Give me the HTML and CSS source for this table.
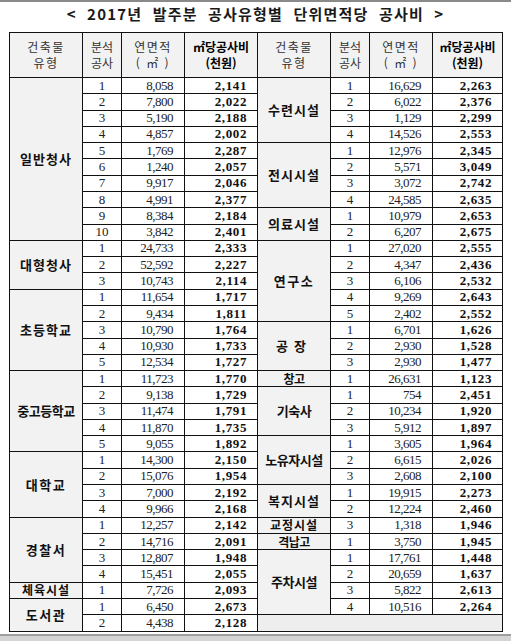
FILE: index.html
```html
<!DOCTYPE html>
<html lang="ko">
<head>
<meta charset="utf-8">
<title>2017년 발주분 공사유형별 단위면적당 공사비</title>
<link rel="stylesheet" href="styles.css">
</head>
<body>
<div class="page">
  <h1 class="title">&lt; 2017년 발주분 공사유형별 단위면적당 공사비 &gt;</h1>
  <table class="cost-table">
    <colgroup>
      <col class="c-type"><col class="c-no"><col class="c-area"><col class="c-cost">
      <col class="c-type"><col class="c-no"><col class="c-area"><col class="c-cost2">
    </colgroup>
    <thead>
      <tr>
        <th class="h-plain sp">건축물<br>유형</th>
        <th class="h-plain">분석<br>공사</th>
        <th class="h-plain sp">연면적<br>( ㎡ )</th>
        <th class="h-bold">㎡당공사비<br>(천원)</th>
        <th class="h-plain sp">건축물<br>유형</th>
        <th class="h-plain">분석<br>공사</th>
        <th class="h-plain sp">연면적<br>( ㎡ )</th>
        <th class="h-bold">㎡당공사비<br>(천원)</th>
      </tr>
    </thead>
    <tbody>
      <tr><td class="cat" rowspan="10">일반청사</td><td class="n">1</td><td class="a">8,058</td><td class="c">2,141</td><td class="cat" rowspan="4">수련시설</td><td class="n">1</td><td class="a">16,629</td><td class="c">2,263</td></tr>
      <tr><td class="n">2</td><td class="a">7,800</td><td class="c">2,022</td><td class="n">2</td><td class="a">6,022</td><td class="c">2,376</td></tr>
      <tr><td class="n">3</td><td class="a">5,190</td><td class="c">2,188</td><td class="n">3</td><td class="a">1,129</td><td class="c">2,299</td></tr>
      <tr><td class="n">4</td><td class="a">4,857</td><td class="c">2,002</td><td class="n">4</td><td class="a">14,526</td><td class="c">2,553</td></tr>
      <tr><td class="n">5</td><td class="a">1,769</td><td class="c">2,287</td><td class="cat" rowspan="4">전시시설</td><td class="n">1</td><td class="a">12,976</td><td class="c">2,345</td></tr>
      <tr><td class="n">6</td><td class="a">1,240</td><td class="c">2,057</td><td class="n">2</td><td class="a">5,571</td><td class="c">3,049</td></tr>
      <tr><td class="n">7</td><td class="a">9,917</td><td class="c">2,046</td><td class="n">3</td><td class="a">3,072</td><td class="c">2,742</td></tr>
      <tr><td class="n">8</td><td class="a">4,991</td><td class="c">2,377</td><td class="n">4</td><td class="a">24,585</td><td class="c">2,635</td></tr>
      <tr><td class="n">9</td><td class="a">8,384</td><td class="c">2,184</td><td class="cat" rowspan="2">의료시설</td><td class="n">1</td><td class="a">10,979</td><td class="c">2,653</td></tr>
      <tr><td class="n">10</td><td class="a">3,842</td><td class="c">2,401</td><td class="n">2</td><td class="a">6,207</td><td class="c">2,675</td></tr>
      <tr><td class="cat" rowspan="3">대형청사</td><td class="n">1</td><td class="a">24,733</td><td class="c">2,333</td><td class="cat wide" rowspan="5">연구소</td><td class="n">1</td><td class="a">27,020</td><td class="c">2,555</td></tr>
      <tr><td class="n">2</td><td class="a">52,592</td><td class="c">2,227</td><td class="n">2</td><td class="a">4,347</td><td class="c">2,436</td></tr>
      <tr><td class="n">3</td><td class="a">10,743</td><td class="c">2,114</td><td class="n">3</td><td class="a">6,106</td><td class="c">2,532</td></tr>
      <tr><td class="cat" rowspan="5">초등학교</td><td class="n">1</td><td class="a">11,654</td><td class="c">1,717</td><td class="n">4</td><td class="a">9,269</td><td class="c">2,643</td></tr>
      <tr><td class="n">2</td><td class="a">9,434</td><td class="c">1,811</td><td class="n">5</td><td class="a">2,402</td><td class="c">2,552</td></tr>
      <tr><td class="n">3</td><td class="a">10,790</td><td class="c">1,764</td><td class="cat wider" rowspan="3">공장</td><td class="n">1</td><td class="a">6,701</td><td class="c">1,626</td></tr>
      <tr><td class="n">4</td><td class="a">10,930</td><td class="c">1,733</td><td class="n">2</td><td class="a">2,930</td><td class="c">1,528</td></tr>
      <tr><td class="n">5</td><td class="a">12,534</td><td class="c">1,727</td><td class="n">3</td><td class="a">2,930</td><td class="c">1,477</td></tr>
      <tr><td class="cat tight" rowspan="5">중고등학교</td><td class="n">1</td><td class="a">11,723</td><td class="c">1,770</td><td class="cat single tight">창고</td><td class="n">1</td><td class="a">26,631</td><td class="c">1,123</td></tr>
      <tr><td class="n">2</td><td class="a">9,138</td><td class="c">1,729</td><td class="cat tight" rowspan="3">기숙사</td><td class="n">1</td><td class="a">754</td><td class="c">2,451</td></tr>
      <tr><td class="n">3</td><td class="a">11,474</td><td class="c">1,791</td><td class="n">2</td><td class="a">10,234</td><td class="c">1,920</td></tr>
      <tr><td class="n">4</td><td class="a">11,870</td><td class="c">1,735</td><td class="n">3</td><td class="a">5,912</td><td class="c">1,897</td></tr>
      <tr><td class="n">5</td><td class="a">9,055</td><td class="c">1,892</td><td class="cat tight" rowspan="3">노유자시설</td><td class="n">1</td><td class="a">3,605</td><td class="c">1,964</td></tr>
      <tr><td class="cat wide" rowspan="4">대학교</td><td class="n">1</td><td class="a">14,300</td><td class="c">2,150</td><td class="n">2</td><td class="a">6,615</td><td class="c">2,026</td></tr>
      <tr><td class="n">2</td><td class="a">15,076</td><td class="c">1,954</td><td class="n">3</td><td class="a">2,608</td><td class="c">2,100</td></tr>
      <tr><td class="n">3</td><td class="a">7,000</td><td class="c">2,192</td><td class="cat" rowspan="2">복지시설</td><td class="n">1</td><td class="a">19,915</td><td class="c">2,273</td></tr>
      <tr><td class="n">4</td><td class="a">9,966</td><td class="c">2,168</td><td class="n">2</td><td class="a">12,224</td><td class="c">2,460</td></tr>
      <tr><td class="cat wide" rowspan="4">경찰서</td><td class="n">1</td><td class="a">12,257</td><td class="c">2,142</td><td class="cat single">교정시설</td><td class="n">3</td><td class="a">1,318</td><td class="c">1,946</td></tr>
      <tr><td class="n">2</td><td class="a">14,716</td><td class="c">2,091</td><td class="cat single tight">격납고</td><td class="n">1</td><td class="a">3,750</td><td class="c">1,945</td></tr>
      <tr><td class="n">3</td><td class="a">12,807</td><td class="c">1,948</td><td class="cat tight" rowspan="4">주차시설</td><td class="n">1</td><td class="a">17,761</td><td class="c">1,448</td></tr>
      <tr><td class="n">4</td><td class="a">15,451</td><td class="c">2,055</td><td class="n">2</td><td class="a">20,659</td><td class="c">1,637</td></tr>
      <tr><td class="cat single">체육시설</td><td class="n">1</td><td class="a">7,726</td><td class="c">2,093</td><td class="n">3</td><td class="a">5,822</td><td class="c">2,613</td></tr>
      <tr><td class="cat wide" rowspan="2">도서관</td><td class="n">1</td><td class="a">6,450</td><td class="c">2,673</td><td class="n">4</td><td class="a">10,516</td><td class="c">2,264</td></tr>
      <tr><td class="n">2</td><td class="a">4,438</td><td class="c">2,128</td><td class="empty" colspan="4"></td></tr>
    </tbody>
  </table>
  <div class="bottom-bar"></div>
</div>
</body>
</html>
```

FILE: styles.css
```css
html, body {
  margin: 0;
  padding: 0;
  background: #ffffff;
  overflow: hidden;
}

.page {
  border-top: 2px solid #8a8a8a;
}

.title {
  margin: 0;
  height: 30px;
  line-height: 24px;
  text-align: center;
  font-family: "Noto Sans CJK KR", "Noto Sans", sans-serif;
  font-size: 15px;
  font-weight: 700;
  color: #1a1a1a;
  letter-spacing: 1.2px;
  word-spacing: 5px;
}

.cost-table {
  margin: 0 0 0 9px;
  width: 494px;
  height: 600px;
  border-collapse: collapse;
  table-layout: fixed;
  border: 1px solid #000;
}

.c-type { width: 73px; }
.c-no { width: 39px; }
.c-area { width: 63px; }
.c-cost { width: 73px; }
.c-cost2 { width: 70px; }

.cost-table th,
.cost-table td {
  border: 1px solid #111;
  padding: 0;
  overflow: hidden;
}

.cost-table thead th {
  height: 44px;
  background: #f2f2f2;
  font-family: "Noto Sans CJK KR", "Noto Sans", sans-serif;
  font-size: 12px;
  line-height: 16px;
  text-align: center;
  vertical-align: middle;
}

.h-plain {
  font-weight: 400;
  color: #333;
}

.h-plain.sp {
  letter-spacing: 1.5px;
}

.h-bold {
  font-weight: 700;
  color: #000;
}

.cost-table tbody td {
  line-height: 14px;
  font-family: "Liberation Serif", "Times New Roman", serif;
  color: #222;
}

.n {
  font-size: 13px;
  text-align: center;
}

.a {
  font-size: 13px;
  letter-spacing: -0.5px;
  text-align: right;
  padding-right: 11px !important;
}

.c {
  font-size: 13px;
  font-weight: 700;
  text-align: right;
  letter-spacing: 0.6px;
  padding-right: 10px !important;
  color: #111 !important;
}

.cat {
  background: #f2f2f2;
  text-align: center;
  vertical-align: middle;
  font-family: "Noto Sans CJK KR", "Noto Sans", sans-serif !important;
  font-size: 13px;
  font-weight: 700;
  letter-spacing: 1px;
  color: #111 !important;
}

.cat.single {
  font-size: 12px;
  line-height: 12px !important;
}

.cat.wide {
  letter-spacing: 1.5px;
}

.cat.wider {
  letter-spacing: 6px;
}

.cat.tight {
  letter-spacing: -0.5px;
}

.cost-table tbody td.empty {
  background: #eeeeee;
}

.bottom-bar {
  margin-top: 2px;
  height: 5px;
  border-top: 2px solid #9e9e9e;
  background: #d4d4d4;
}
```
